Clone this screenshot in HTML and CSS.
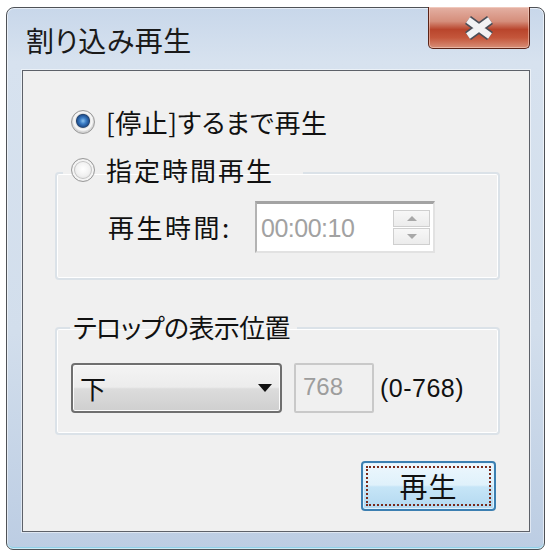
FILE: index.html
```html
<!DOCTYPE html>
<html lang="ja">
<head>
<meta charset="utf-8">
<title>割り込み再生</title>
<link rel="stylesheet" href="styles.css">
</head>
<body>
<div class="window">
  <div class="titlebar">
    <span class="title">割り込み再生</span>
    <div class="close">
      <svg width="32" height="24" viewBox="0 0 32 24">
        <path d="M5 4 L27 20 M27 4 L5 20" stroke="#4a4e58" stroke-width="10" stroke-linecap="butt"/>
        <path d="M5 4 L27 20 M27 4 L5 20" stroke="#f2f2f4" stroke-width="6.5" stroke-linecap="butt"/>
      </svg>
    </div>
  </div>
  <div class="client">
    <div class="radio-row">
      <span class="radio checked"></span>
      <span class="rtext">[停止]するまで再生</span>
    </div>
    <fieldset class="group g1">
      <legend class="legend1"><span class="radio"></span><span class="rtext wide">指定時間再生</span></legend>
      <div class="row row1">
        <span class="lbl">再生時間:</span>
        <div class="spin">
          <span class="spin-val">00:00:10</span>
          <div class="spin-btns">
            <span class="sbtn"><svg width="10" height="5" viewBox="0 0 10 5"><path d="M0 5 L5 0 L10 5 Z" fill="#a8a8a8"/></svg></span>
            <span class="sbtn"><svg width="10" height="5" viewBox="0 0 10 5"><path d="M0 0 L5 5 L10 0 Z" fill="#a8a8a8"/></svg></span>
          </div>
        </div>
      </div>
    </fieldset>
    <fieldset class="group g2">
      <legend class="legend2">テロップの表示位置</legend>
      <div class="row row2">
        <div class="combo">
          <span class="combo-val">下</span>
          <svg width="14" height="8" viewBox="0 0 14 8"><path d="M0 0 L14 0 L7 8 Z" fill="#111"/></svg>
        </div>
        <div class="edit">768</div>
        <span class="range">(0-768)</span>
      </div>
    </fieldset>
    <div class="footer">
      <div class="play"><span class="focus">再生</span></div>
    </div>
  </div>
</div>
</body>
</html>
```
FILE: styles.css
```css
html, body {
  margin: 0;
  padding: 0;
  background: #ffffff;
}
body {
  font-family: "Noto Sans CJK JP", "Noto Sans", sans-serif;
  font-feature-settings: "palt";
  color: #111;
}
.window {
  box-sizing: border-box;
  margin: 7px 0 0 6px;
  width: 539px;
  height: 543px;
  border: 1px solid #4f5257;
  border-radius: 8px 8px 7px 7px;
  background: linear-gradient(to bottom, #c8d7ea 0, #d7e2ef 10%, #d2deec 60%, #bccde3 100%);
  box-shadow: inset 0 0 0 1px rgba(255,255,255,0.55), inset 0 -2px 0 #8fd0e8;
  padding: 0 14px 17px 15px;
  display: flex;
  flex-direction: column;
}
.titlebar {
  height: 62px;
  display: flex;
  align-items: flex-start;
}
.title {
  font-size: 28px;
  line-height: 30px;
  margin: 17px 0 0 4px;
  color: #1a1a1a;
  letter-spacing: 0.5px;
}
.close {
  margin: -1px 0 0 auto;
  width: 102px;
  height: 42px;
  box-sizing: border-box;
  border: 1px solid #5b2418;
  border-top: none;
  border-radius: 0 0 5px 5px;
  background: linear-gradient(to bottom, #e4b1a4 0, #d58e7b 35%, #b9452c 55%, #c4563b 75%, #d88f78 100%);
  box-shadow: inset 0 0 0 1px rgba(255,230,220,0.45);
  display: flex;
  align-items: center;
  justify-content: center;
}
.client {
  flex: 1;
  background: #f0f0f0;
  border: 1px solid #5d6169;
  box-shadow: 0 0 0 1px rgba(255,255,255,0.5);
  display: flex;
  flex-direction: column;
  padding: 37px 0 20px 0;
}
.radio-row {
  height: 28px;
  display: flex;
  align-items: center;
  padding-left: 48px;
}
.radio {
  box-sizing: border-box;
  width: 24px;
  height: 24px;
  border-radius: 50%;
  border: 1px solid #9a9a9a;
  background: radial-gradient(circle at 50% 45%, #ffffff 0, #f2f2f2 40%, #dcdcdc 75%, #e9e9e9 100%);
  box-shadow: inset 0 0 0 2px #f4f4f4, inset 0 0 0 3px #c4c4c4;
  flex: none;
}
.radio.checked {
  background: radial-gradient(circle at 50% 45%, #8cc4f0 0, #3d7fc7 3px, #1f4f8f 6px, #27466e 6.5px, #e6e6e6 7.5px, #fafafa 9px, #d4d4d4 11px);
  box-shadow: none;
}
.rtext {
  font-size: 26px;
  line-height: 28px;
  margin-left: 11px;
  letter-spacing: 0.5px;
}
.rtext.wide {
  letter-spacing: 2px;
}
.group {
  margin: 0 29px 0 32px;
  border: 2px solid #dbe2e8;
  border-radius: 4px;
  box-shadow: inset 0 0 0 1px #ffffff;
  padding: 0;
  min-width: 0;
}
.g1 {
  margin-top: 20px;
  padding: 11px 0 25px 0;
}
.g2 {
  margin-top: 33px;
  padding: 20px 0 20px 0;
}
.legend1 {
  margin-left: 6px;
  padding: 0 29px 6px 8px;
  display: flex;
  align-items: center;
  height: 28px;
}
.legend2 {
  margin-left: 13px;
  padding: 0 7px 2px 3px;
  font-size: 26px;
  line-height: 28px;
  letter-spacing: -0.6px;
}
.row {
  display: flex;
  align-items: center;
}
.row1 {
  margin-left: 51px;
}
.lbl {
  font-size: 26px;
  line-height: 28px;
  width: 147px;
  letter-spacing: 2.5px;
}
.spin {
  box-sizing: border-box;
  width: 180px;
  height: 52px;
  background: #ffffff;
  border-top: 3px solid #a3a3a3;
  border-left: 2px solid #b3b3b3;
  border-right: 2px solid #e2e2e2;
  border-bottom: 2px solid #e2e2e2;
  display: flex;
  align-items: center;
  padding: 0 3px 0 4px;
}
.spin-val {
  flex: 1;
  font-family: "Liberation Sans", sans-serif;
  font-size: 25px;
  line-height: 28px;
  color: #a2a2a2;
  letter-spacing: -0.5px;
}
.spin-btns {
  display: flex;
  flex-direction: column;
  gap: 1px;
}
.sbtn {
  box-sizing: border-box;
  width: 37px;
  height: 17px;
  border: 1px solid #cfcfcf;
  background: linear-gradient(to bottom, #f7f7f7, #ececec);
  display: flex;
  align-items: center;
  justify-content: center;
}
.row2 {
  margin-left: 14px;
  gap: 12px;
}
.combo {
  box-sizing: border-box;
  width: 211px;
  height: 50px;
  border: 2px solid #6f6f6f;
  border-radius: 4px;
  background: linear-gradient(to bottom, #f4f4f4 0, #ececec 48%, #dcdcdc 52%, #cfcfcf 100%);
  box-shadow: inset 0 0 0 1px #fbfbfb;
  display: flex;
  align-items: center;
  justify-content: space-between;
  padding: 0 8px 0 7px;
}
.combo-val {
  font-size: 26px;
  line-height: 28px;
}
.edit {
  box-sizing: border-box;
  width: 80px;
  height: 50px;
  border: 2px solid #c9c9c9;
  border-radius: 2px;
  background: #f0f0f0;
  color: #9d9d9d;
  font-family: "Liberation Sans", sans-serif;
  font-size: 24px;
  line-height: 28px;
  padding: 8px 0 0 7px;
}
.range {
  margin-left: -6px;
  font-family: "Liberation Sans", sans-serif;
  font-size: 25px;
  line-height: 28px;
  letter-spacing: 0.5px;
}
.footer {
  margin-top: 26px;
  display: flex;
  justify-content: flex-end;
  padding-right: 33px;
}
.play {
  box-sizing: border-box;
  width: 135px;
  height: 50px;
  border: 2px solid #3c7fb1;
  border-radius: 4px;
  background: linear-gradient(to bottom, #edf7fd 0, #dff1fb 48%, #c6e5f7 52%, #b3d9f0 100%);
  box-shadow: inset 0 0 0 1px #dff3ff;
  padding: 3px;
  display: flex;
}
.focus {
  flex: 1;
  border: 2px dotted #7a2a1a;
  display: flex;
  align-items: center;
  justify-content: center;
  font-size: 28px;
  line-height: 30px;
  letter-spacing: 1px;
}
```
